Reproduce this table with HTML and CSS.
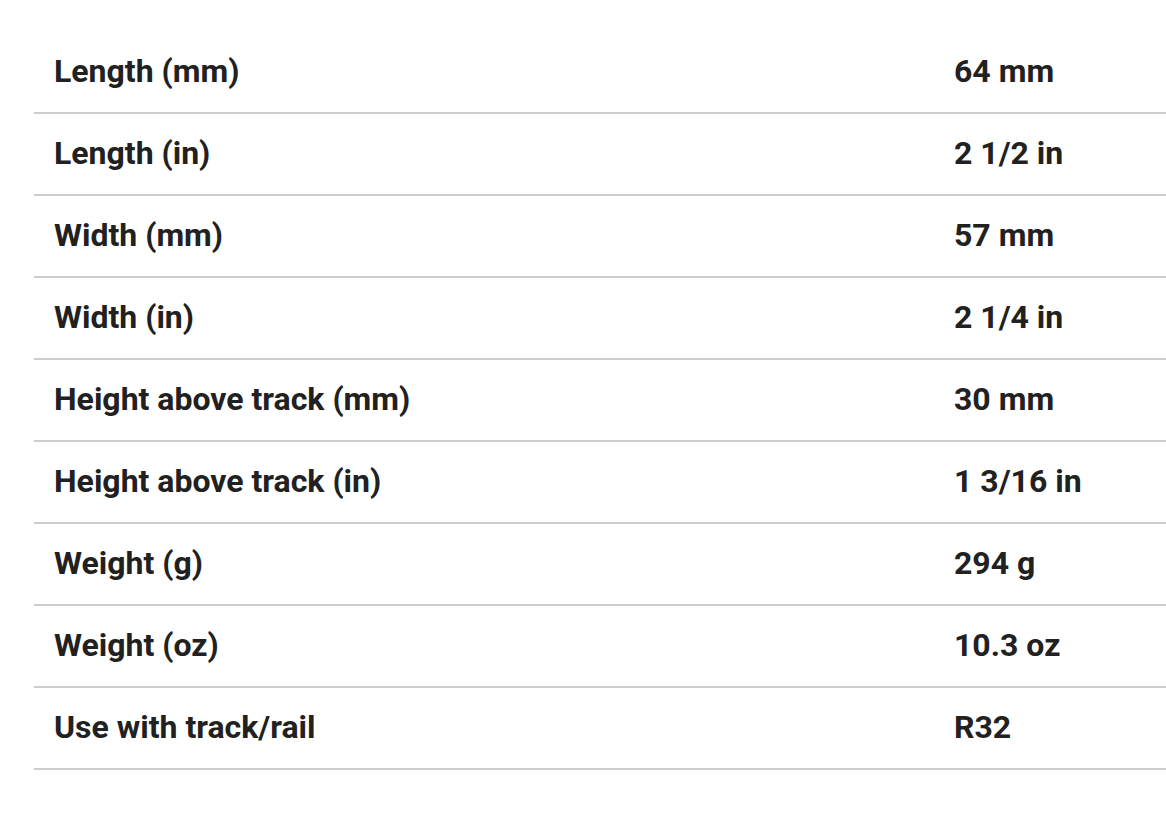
FILE: index.html
```html
<!DOCTYPE html>
<html>
<head>
<meta charset="utf-8">
<link rel="stylesheet" href="styles.css">
</head>
<body>
<div class="wrap">
<table class="specs">
<tbody>
<tr><td class="label">Length (mm)</td><td class="value">64 mm</td></tr>
<tr><td class="label">Length (in)</td><td class="value">2 1/2 in</td></tr>
<tr><td class="label">Width (mm)</td><td class="value">57 mm</td></tr>
<tr><td class="label">Width (in)</td><td class="value">2 1/4 in</td></tr>
<tr><td class="label">Height above track (mm)</td><td class="value">30 mm</td></tr>
<tr><td class="label">Height above track (in)</td><td class="value">1 3/16 in</td></tr>
<tr><td class="label">Weight (g)</td><td class="value">294 g</td></tr>
<tr><td class="label">Weight (oz)</td><td class="value">10.3 oz</td></tr>
<tr><td class="label">Use with track/rail</td><td class="value">R32</td></tr>
</tbody>
</table>
</div>
</body>
</html>
```
FILE: styles.css
```css
html, body {
  margin: 0;
  padding: 0;
  background: #fff;
}
.wrap {
  padding: 32px 0 0 34px;
  overflow: hidden;
}
.specs {
  border-collapse: collapse;
  width: 1200px;
  font-family: Roboto, "Liberation Sans", sans-serif;
  font-weight: 700;
  font-size: 32px;
  color: #212121;
}
.specs td {
  height: 78px;
  padding: 0 20px 2px;
  border-bottom: 2px solid #cccccc;
  vertical-align: middle;
  box-sizing: content-box;
}
.specs td.label {
  width: 860px;
}
```
